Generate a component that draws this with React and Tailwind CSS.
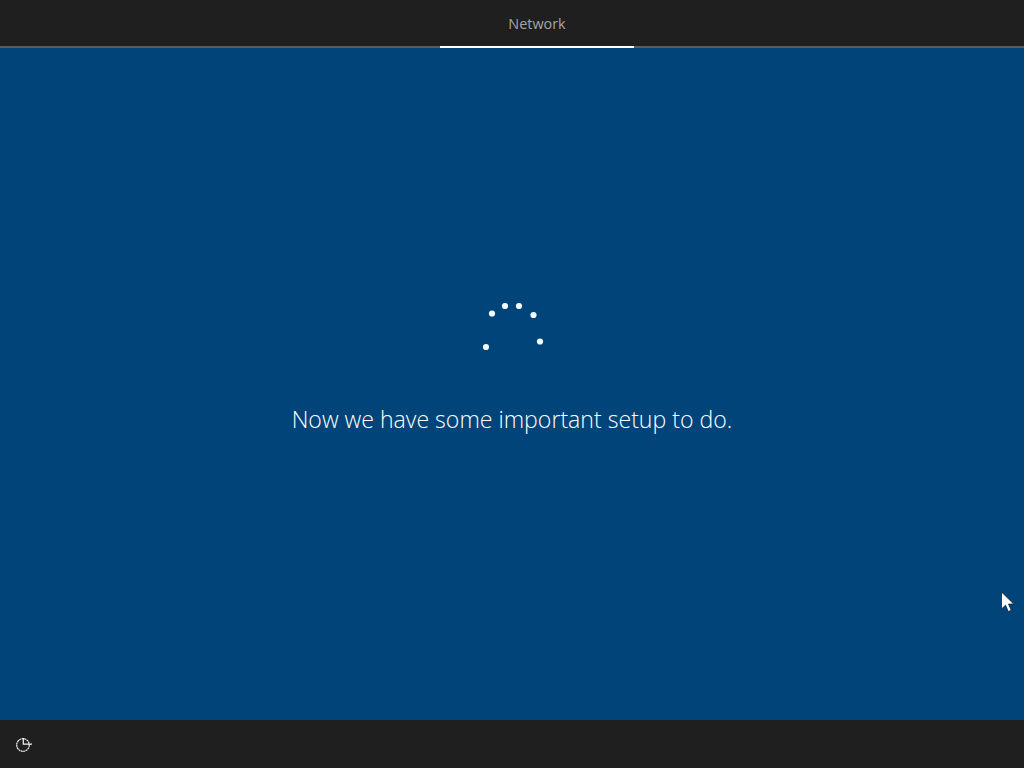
export default function App() {
  const dots = [[492, 313.5], [505, 306], [519, 306], [533.5, 315], [540, 341.5], [486, 347]];
  return (
    <div className="relative flex h-[768px] w-[1024px] flex-col overflow-hidden bg-[#00447a] font-['Open_Sans','Noto_Sans',sans-serif]">
      <header className="flex h-[48px] shrink-0 border-b-2 border-[#5c5c5c] bg-[#1f1f1f]">
        <div className="ml-[440px] -mb-[2px] flex h-[48px] w-[194px] items-center justify-center border-b-2 border-white pt-[2px] text-[14.4px] text-[#a6a6a6]">
          Network
        </div>
      </header>
      <main className="flex flex-1 flex-col items-center">
        <svg className="mt-[255px] h-[50px] w-[60px] overflow-visible" viewBox="482 303 60 50">
          {dots.map(([x, y]) => (
            <circle key={x} cx={x} cy={y} r="3.1" fill="#f4fbff" />
          ))}
        </svg>
        <p className="mt-[49px] text-[23.1px] font-light leading-[34px] text-[#ffffff]">Now we have some important setup to do.</p>
      </main>
      <footer className="flex h-[48px] shrink-0 items-center bg-[#1f1f1f] pl-[16px]">
        <svg width="16" height="16" viewBox="0 0 16 16" fill="none" stroke="#f4f4f4" strokeWidth="1.2">
          <circle cx="7" cy="9" r="6.3" strokeDasharray="2 0.5" />
          <path d="M7.3 2V8.2H16" />
        </svg>
      </footer>
      <svg className="absolute left-[1000px] top-[591px]" width="15" height="23" viewBox="0 0 15 23">
        <path d="M1.5 1v17l4-3.8 2.8 6.4 3-1.3-2.8-6.2h5.3z" fill="#ffffff" stroke="#0a2238" strokeWidth="0.8" />
      </svg>
    </div>
  );
}
